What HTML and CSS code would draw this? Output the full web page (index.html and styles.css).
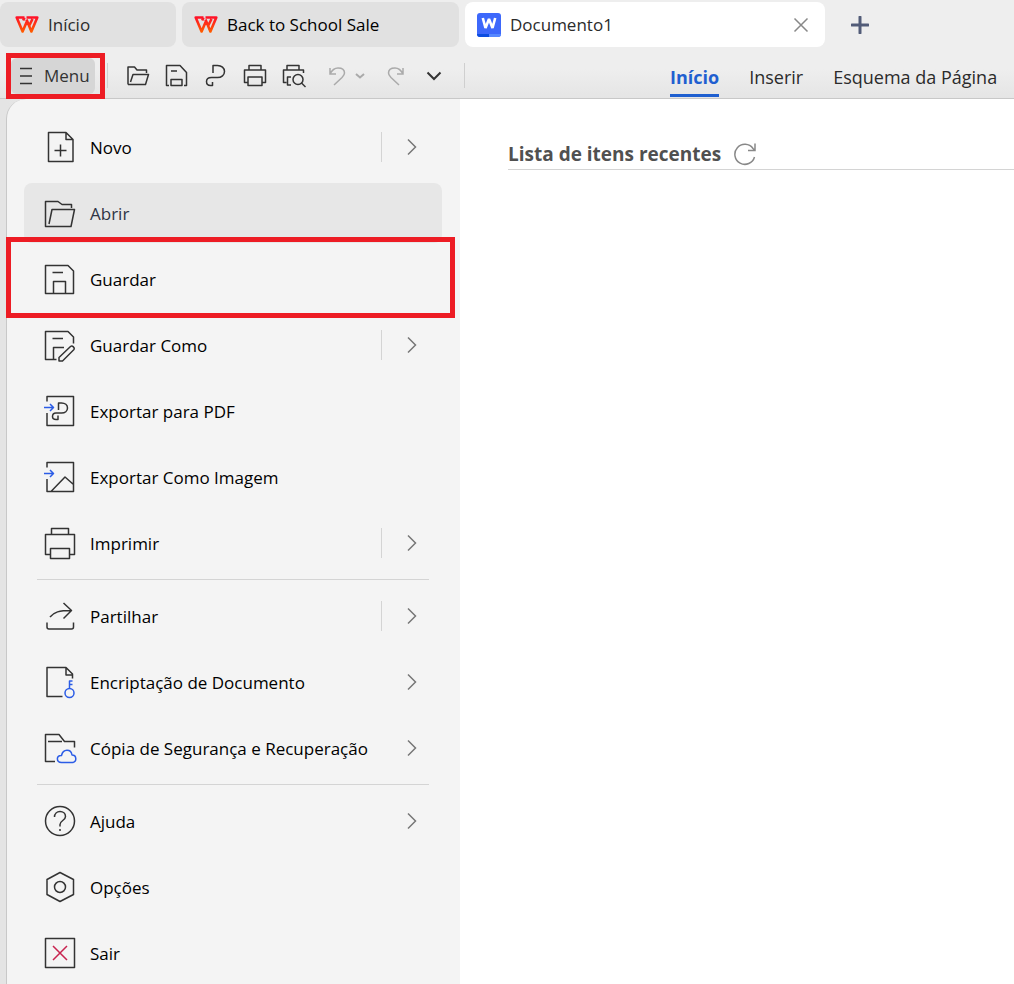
FILE: index.html
```
<!DOCTYPE html>
<html lang="pt">
<head>
    <meta charset="UTF-8">
    <meta name="viewport" content="width=device-width, initial-scale=1.0">
    <title>Documento1</title>
    <link rel="stylesheet" href="styles.css">
</head>
<body>
    <!-- Shared symbols -->
    <svg class="symbols" aria-hidden="true">
        <defs>
            <linearGradient id="logo-fill" x1="0" y1="0" x2="0" y2="1">
                <stop offset="0" stop-color="#ff1228"/>
                <stop offset="1" stop-color="#ff5a00"/>
            </linearGradient>
        </defs>
        <symbol id="logo" viewBox="0 0 24 18">
            <path d="M9.500 1.500H1.700L7.600 15.500L12.300 4.500M8.200 4.500L9.500 1.500M11.500 1.500H22.300L16.400 15.500L11.500 3.500M14.300 9.500L17.500 3" fill="none" stroke="url(#logo-fill)" stroke-width="2.600" stroke-linejoin="round"/>
        </symbol>
        <symbol id="chevron" viewBox="0 0 10 18">
            <path d="M1 1.500L8.500 9L1 16.500" fill="none" stroke="#777" stroke-width="1.500"/>
        </symbol>
    </svg>

    <div class="app">
        <header class="header">
            <div class="tabs">
                <button class="tab tab-home">
                    <svg class="tab-logo"><use href="#logo"/></svg>
                    <span>Início</span>
                </button>
                <button class="tab tab-sale">
                    <svg class="tab-logo"><use href="#logo"/></svg>
                    <span>Back to School Sale</span>
                </button>
                <div class="tab tab-doc active">
                    <svg class="doc-logo" viewBox="0 0 24 24">
                        <rect width="24" height="24" rx="3" fill="#3d68fb"/>
                        <path d="M0 21H12V24H3Q0 24 0 21Z" fill="#0c4de0"/>
                        <path d="M12 21H24Q24 24 21 24H12Z" fill="#5688ff"/>
                        <path d="M5.800 5L8.500 15L12 6L15.500 15L18.200 5" fill="none" stroke="#fff" stroke-width="2.600" stroke-linejoin="bevel"/>
                    </svg>
                    <span>Documento1</span>
                    <button class="tab-close" aria-label="Fechar">
                        <svg viewBox="0 0 16 16"><path d="M1.500 1.500L14.500 14.500M14.500 1.500L1.500 14.500"/></svg>
                    </button>
                </div>
                <button class="new-tab" aria-label="Novo separador">
                    <svg viewBox="0 0 18 18"><path d="M9 1V17M1 9H17"/></svg>
                </button>
            </div>

            <div class="toolbar">
                <button class="menu-button highlight">
                    <svg class="burger" viewBox="0 0 14 18"><path d="M1 1.500H13M1 9H13M1 16.500H13"/></svg>
                    <span>Menu</span>
                </button>
                <div class="separator"></div>
                <div class="quick">
                    <button aria-label="Abrir">
                        <svg viewBox="0 0 24 24"><path d="M2 20.500V3H8.500L11 6H20.500V9M2 20.500H19.500L22.500 10.500H7L4.500 18"/></svg>
                    </button>
                    <button aria-label="Guardar">
                        <svg viewBox="0 0 24 24"><path d="M4 21.500H1.500V1.500H15L21.500 8.500V21.500H19M6 21.500V15.500H17V21.500ZM6 7H12"/></svg>
                    </button>
                    <button aria-label="Exportar para PDF">
                        <svg viewBox="0 0 24 24"><path d="M9 9V1.500H13.500C17.500 1.500 20.500 4 20.500 7.500S17.500 13.500 13.500 13.500H7.500C4.500 13.500 2.500 15 2.500 17.500S4 21.500 6.500 21.500H8.500V18"/></svg>
                    </button>
                    <button aria-label="Imprimir">
                        <svg viewBox="0 0 24 24"><path d="M6 6V1.500H18V6M5 18.500H1.500V6H22.500V18.500H19M5 13H19V21.500H5Z"/></svg>
                    </button>
                    <button aria-label="Pré-visualizar">
                        <svg viewBox="0 0 24 24"><path d="M5 6V1.500H17V6M4.500 18.500H1.500V6H21.500V9M9 13H5.500V21H9"/><circle cx="16" cy="15.500" r="5"/><path d="M19.500 19L23.500 23"/></svg>
                    </button>
                </div>
                <div class="history">
                    <button class="undo" aria-label="Anular">
                        <svg viewBox="0 0 18 20"><path d="M2 2V8H8M2 8C4 4 7 2 10 2C14 2 16.500 4 16.500 7C16.500 9 15.500 10 14 11.500L6 19"/></svg>
                    </button>
                    <button class="caret" aria-label="Mais anular">
                        <svg viewBox="0 0 10 6"><path d="M1 1L5 4.500L9 1"/></svg>
                    </button>
                    <button class="redo" aria-label="Refazer">
                        <svg viewBox="0 0 18 20"><path d="M16 2V8H10M16 8C14 4 11 2 8 2C4 2 1.500 4 1.500 7C1.500 9 2.500 10 4 11.500L12 19"/></svg>
                    </button>
                    <button class="more" aria-label="Mais">
                        <svg viewBox="0 0 16 10"><path d="M1.500 1.500L8 8L14.500 1.500"/></svg>
                    </button>
                </div>
                <div class="separator"></div>
                <nav class="ribbon">
                    <a href="#" class="current">Início</a>
                    <a href="#">Inserir</a>
                    <a href="#">Esquema da Página</a>
                </nav>
            </div>
        </header>

        <div class="body">
            <nav class="side-menu">
                <button class="item">
                    <svg class="icon" viewBox="0 0 32 32"><path d="M4.500 1.500H22L29 8.500V30.500H4.500ZM22 1.500V8.500H29M16.500 13.500V25.500M10.500 19.500H22.500"/></svg>
                    <span class="label">Novo</span>
                    <svg class="arrow split"><use href="#chevron"/></svg>
                </button>
                <button class="item hovered">
                    <svg class="icon" viewBox="0 0 32 32"><path d="M27.500 11V7.500H18L14 4.500H1.500V29.500H27L30.500 12.500H8L5 27"/></svg>
                    <span class="label">Abrir</span>
                </button>
                <button class="item highlight">
                    <svg class="icon" viewBox="0 0 32 32"><path d="M1.500 2.500H24L29.500 8V30.500H1.500ZM9.500 30.500V18.500H21.500V30.500M8.500 9.500H19"/></svg>
                    <span class="label">Guardar</span>
                </button>
                <button class="item">
                    <svg class="icon" viewBox="0 0 32 32"><path d="M12.500 30.500H1.500V2.500H24L29.500 8V14.500M9.500 30.500V18.500H20M8.500 9.500H19"/><path d="M26.500 17.500L15 28.500V32H18.500L30 20.500C31 19 28.500 16 26.500 17.500Z"/></svg>
                    <span class="label">Guardar Como</span>
                    <svg class="arrow split"><use href="#chevron"/></svg>
                </button>
                <button class="item">
                    <svg class="icon" viewBox="0 0 32 32"><path d="M3 6.500V1.500H29.500V30.500H3V18M14.500 15V8H17.500C21 8 23.500 10 23.500 13S21 18 17.500 18H12C9.500 18 8.500 19.500 8.500 21.500S10 24.500 12 24.500H14V20.500"/><path class="blue" d="M0 12.500H9.500M6 9L9.500 12.500L6 16"/></svg>
                    <span class="label">Exportar para PDF</span>
                </button>
                <button class="item">
                    <svg class="icon" viewBox="0 0 32 32"><path d="M3 6.500V1.500H29.500V30.500H3V18M7 30.500L21 16L29.500 23.500"/><path class="blue" d="M0 12.500H9.500M6 9L9.500 12.500L6 16"/></svg>
                    <span class="label">Exportar Como Imagem</span>
                </button>
                <button class="item">
                    <svg class="icon" viewBox="0 0 32 32"><path d="M7.500 7.500V1.500H24.500V7.500M6.500 27.500H1.500V7.500H30.500V27.500H25.500M6.500 21.500H25.500V31.500H6.500Z"/></svg>
                    <span class="label">Imprimir</span>
                    <svg class="arrow split"><use href="#chevron"/></svg>
                </button>
                <hr>
                <button class="item">
                    <svg class="icon" viewBox="0 0 32 32"><path d="M3 22.500V27Q3 29 5 29H27.500Q29.500 29 29.500 27V22.500M6 17C10 12 15 10.500 27.500 10.500M19.500 3L27.500 10.500L19.500 18.500"/></svg>
                    <span class="label">Partilhar</span>
                    <svg class="arrow split"><use href="#chevron"/></svg>
                </button>
                <button class="item">
                    <svg class="icon" viewBox="0 0 32 32"><path d="M18.500 30.500H3V1.500H22L28.500 8V12.500M22 1.500V9H28.500"/><g class="blue"><circle cx="25.500" cy="27" r="4.500"/><path d="M25.500 22.500V15H28.500M25.500 18.500H28.500"/></g></svg>
                    <span class="label">Encriptação de Documento</span>
                    <svg class="arrow"><use href="#chevron"/></svg>
                </button>
                <button class="item">
                    <svg class="icon" viewBox="0 0 32 32"><path d="M11 29.500H1.500V2.500H15L20.500 9.500H30.500V15.500M4 9.500H18"/><path class="blue" d="M17.500 30.500C12 30.500 12 23 17.500 23.500C19 16.500 27 16.500 28 23C33 23 33 30.500 28.500 30.500Z"/></svg>
                    <span class="label">Cópia de Segurança e Recuperação</span>
                    <svg class="arrow"><use href="#chevron"/></svg>
                </button>
                <hr>
                <button class="item">
                    <svg class="icon" viewBox="0 0 32 32"><circle cx="16" cy="16" r="14.500"/><path d="M10.500 12C10.500 8.500 13 6.500 16 6.500S21.500 8.500 21.500 11.500C21.500 15.500 16 15.500 16 19.500V21.500M16 24V26"/></svg>
                    <span class="label">Ajuda</span>
                    <svg class="arrow"><use href="#chevron"/></svg>
                </button>
                <button class="item">
                    <svg class="icon" viewBox="0 0 32 32"><path d="M16 1.500L29.500 8.500V23.500L16 30.500L3 23.500V8.500Z"/><circle cx="16" cy="16" r="5.500"/></svg>
                    <span class="label">Opções</span>
                </button>
                <button class="item">
                    <svg class="icon" viewBox="0 0 32 32"><path d="M1.500 1.500H30.500V30.500H1.500Z"/><path class="red" d="M9 9L23 23M23 9L9 23"/></svg>
                    <span class="label">Sair</span>
                </button>
            </nav>

            <main class="recent">
                <div class="recent-head">
                    <h1>Lista de itens recentes</h1>
                    <button aria-label="Atualizar">
                        <svg viewBox="0 0 24 24"><path d="M21.500 15A10 10 0 1 1 20 6.500L22 8.500M22 1.500V8.500H15"/></svg>
                    </button>
                </div>
            </main>
        </div>
    </div>
</body>
</html>
```
FILE: styles.css
```
* {
    box-sizing: border-box;
}

body {
    margin: 0;
    font-family: 'Open Sans', 'Noto Sans', sans-serif;
    font-size: 17px;
    color: #000;
    background: #fff;
    overflow: hidden;
}

button {
    margin: 0;
    padding: 0;
    border: 0;
    background: none;
    font: inherit;
    color: inherit;
    text-align: left;
    cursor: pointer;
}

svg {
    display: block;
    flex: none;
    fill: none;
}

.symbols {
    position: absolute;
    width: 0;
    height: 0;
}

.app {
    display: flex;
    flex-direction: column;
    min-height: 100vh;
}

/* Header: document tabs and toolbar */
.header {
    background: linear-gradient(#eee 70%, #e5e5e5);
    border-bottom: 1px solid #c8c8c8;
}

.tabs {
    display: flex;
    gap: 6px;
    padding-top: 2px;
}

.tab {
    display: flex;
    align-items: center;
    gap: 9px;
    height: 45px;
    padding: 0 12px;
    border-radius: 8px;
    background: #e1e1e1;
    color: #2b2b2b;
    white-space: nowrap;
}

.tab-home {
    flex: 0 1 176px;
    padding-left: 15px;
}

.tab-sale {
    flex: 0 1 277px;
    color: #000;
}

.tab-doc {
    flex: 0 1 360px;
    background: #fff;
}

.tab-logo {
    width: 24px;
    height: 18px;
}

.doc-logo {
    width: 24px;
    height: 24px;
}

.tab-close {
    margin-left: auto;
    padding: 4px;
}

.tab-close svg {
    width: 16px;
    height: 16px;
    stroke: #888;
    stroke-width: 1.5;
}

.new-tab {
    padding: 0 20px;
}

.new-tab svg {
    width: 18px;
    height: 18px;
    stroke: #525c78;
    stroke-width: 3;
    stroke-linecap: round;
}

.toolbar {
    display: flex;
    align-items: center;
    height: 51px;
    padding: 6px 0 0 11px;
}

.menu-button {
    display: flex;
    align-items: center;
    gap: 11px;
    width: 84px;
    height: 36px;
    padding-left: 8px;
    border-radius: 6px;
    background: #d6d6d6;
    color: #333;
}

.burger {
    width: 14px;
    height: 18px;
    stroke: #333;
    stroke-width: 1.5;
}

.separator {
    width: 1px;
    height: 25px;
    margin-left: 12px;
    background: #cfcfcf;
}

.quick,
.history {
    display: flex;
    align-items: center;
}

.quick {
    gap: 15px;
    margin-left: 18px;
}

.quick svg {
    width: 24px;
    height: 24px;
    stroke: #333;
    stroke-width: 1.5;
    stroke-linejoin: round;
}

.history {
    margin: 0 10px 0 22px;
}

.history svg {
    stroke: #aaa;
    stroke-width: 1.5;
}

.undo svg,
.redo svg {
    width: 18px;
    height: 20px;
}

.caret {
    margin: 0 22px 0 9px;
}

.caret svg {
    width: 10px;
    height: 6px;
    stroke-width: 2;
}

.more {
    margin-left: 21px;
}

.more svg {
    width: 16px;
    height: 10px;
    stroke: #333;
    stroke-width: 2;
}

.ribbon {
    display: flex;
    gap: 30px;
    margin-left: 205px;
    font-size: 18px;
    white-space: nowrap;
}

.ribbon a {
    padding-top: 5px;
    border-bottom: 3px solid transparent;
    color: #2b2b2b;
    line-height: 34px;
    text-decoration: none;
}

.ribbon .current {
    border-bottom-color: #1f5fd0;
    color: #1f5fd0;
    font-weight: bold;
}

/* Body: side menu and recent list */
.body {
    display: flex;
    flex: 1;
    background: linear-gradient(90deg, #e4e4e4 7px, #fff 300px);
}

.side-menu {
    display: flex;
    flex-direction: column;
    gap: 6px;
    flex: 0 0 454px;
    margin-left: 6px;
    padding: 18px 18px 1px 17px;
    border-left: 1px solid #c8c8c8;
    border-top-left-radius: 20px;
    background: #f4f4f4;
}

.item {
    position: relative;
    display: flex;
    align-items: center;
    gap: 14px;
    height: 60px;
    padding: 0 25px 0 20px;
    border-radius: 8px;
    white-space: nowrap;
}

.hovered {
    background: #e7e7e7;
    color: #2e3444;
}

.icon {
    width: 32px;
    height: 32px;
    stroke: #333;
    stroke-width: 1.5;
    stroke-linejoin: round;
    overflow: visible;
}

.icon .blue {
    stroke: #2b5ce6;
}

.icon .red {
    stroke: #c8234f;
}

.label {
    flex: 1;
}

.arrow {
    box-sizing: content-box;
    width: 10px;
    height: 18px;
}

.arrow.split {
    padding: 6px 0 6px 25px;
    border-left: 1px solid #d4d4d4;
}

.side-menu hr {
    width: auto;
    height: 1px;
    margin: 0 13px;
    border: 0;
    background: #d4d4d4;
}

.recent {
    flex: 1;
    padding: 36px 0 0 48px;
    background: #fff;
}

.recent-head {
    display: flex;
    align-items: center;
    gap: 12px;
    height: 35px;
    padding-top: 4px;
    border-bottom: 1px solid #d4d4d4;
    color: #505050;
}

.recent-head h1 {
    margin: 0;
    font-size: 19px;
    line-height: 28px;
    white-space: nowrap;
}

.recent-head svg {
    width: 24px;
    height: 24px;
    stroke: #888;
    stroke-width: 1.5;
}

/* Red frames drawn over the highlighted steps */
.highlight {
    position: relative;
}

.highlight::after {
    content: '';
    position: absolute;
    inset: -12px -13px -9px -18px;
    border: 5px solid #ed1c24;
}

.menu-button.highlight::after {
    inset: -5px -10px -5px -5px;
}
```
